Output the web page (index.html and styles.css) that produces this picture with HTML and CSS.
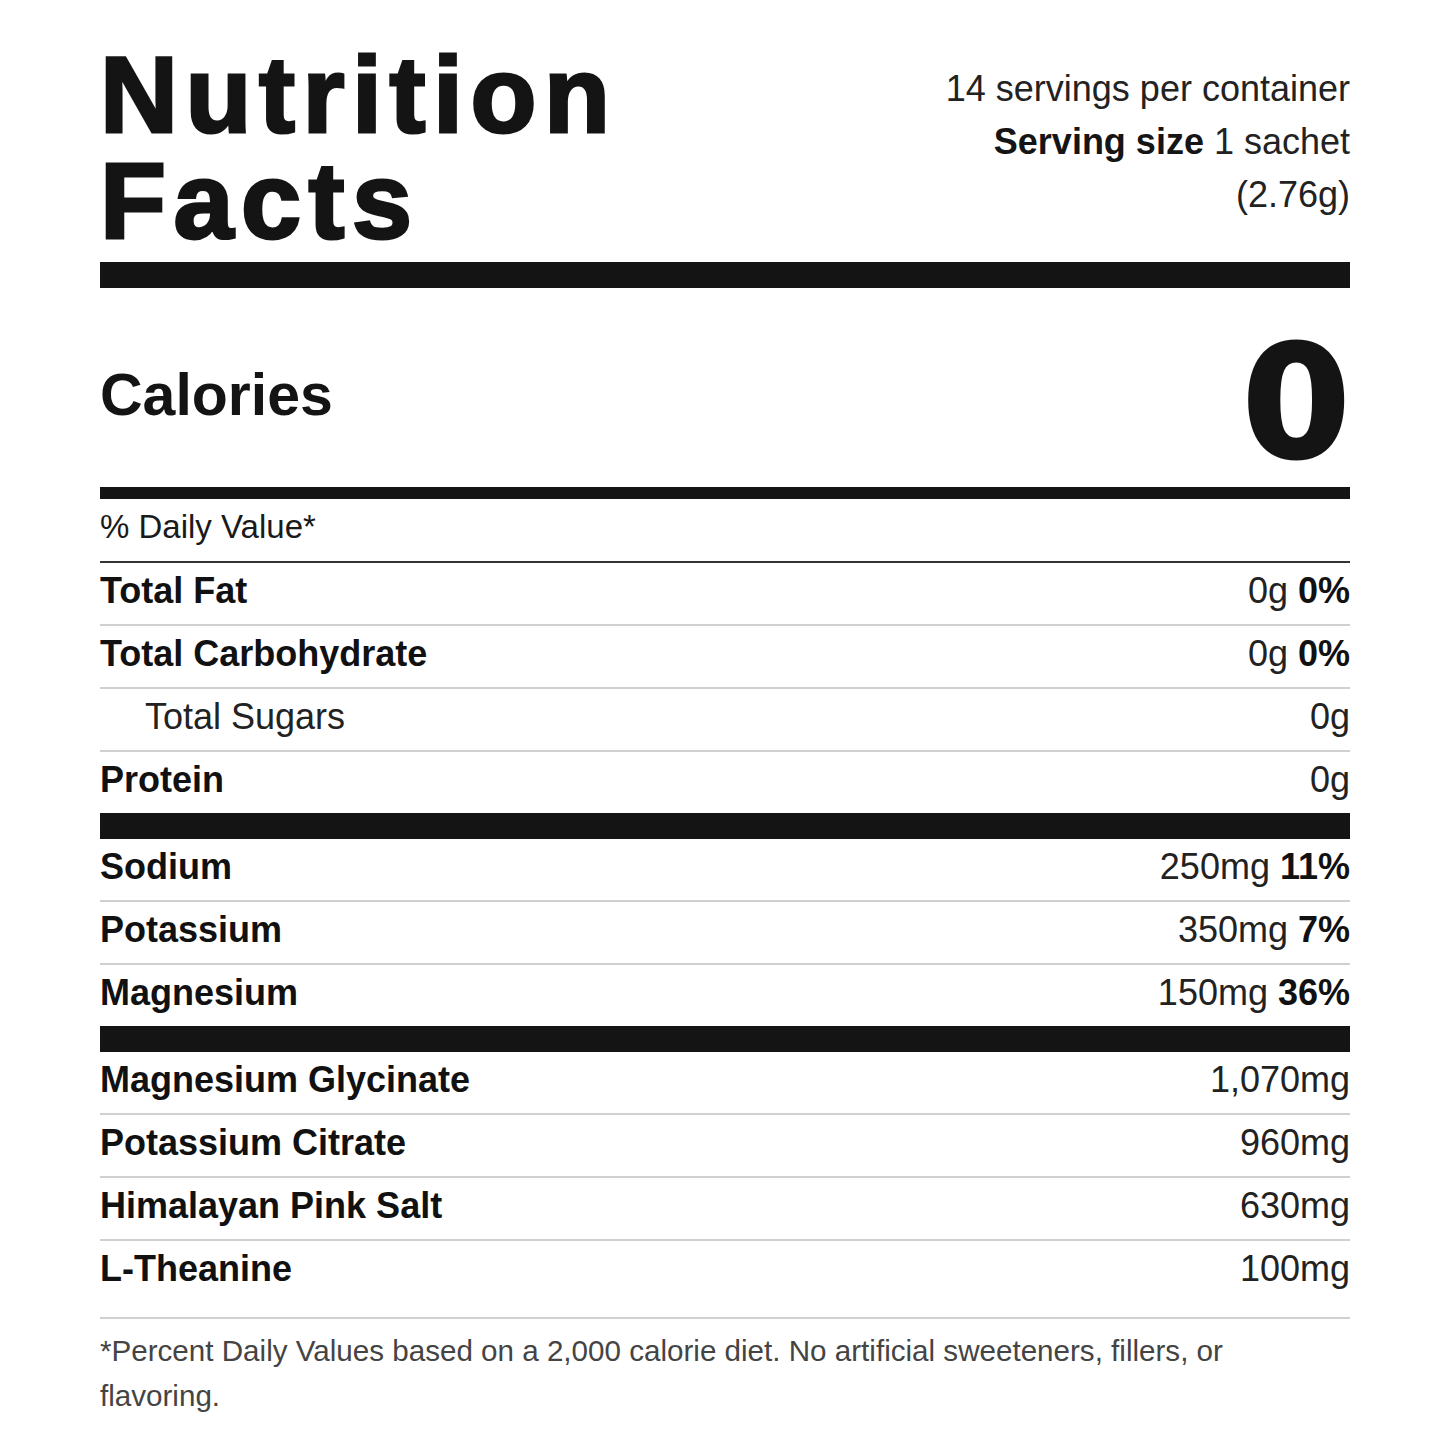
FILE: index.html
```html
<!DOCTYPE html>
<html lang="en">
<head>
<meta charset="utf-8">
<title>Nutrition Facts</title>
<link rel="stylesheet" href="styles.css">
</head>
<body>
<div class="label">
  <header class="top">
    <h1 class="title">Nutrition<br>Facts</h1>
    <div class="serving">
      <p>14 servings per container</p>
      <p><b>Serving size</b> 1 sachet (2.76g)</p>
    </div>
  </header>
  <div class="bar bar-thick bar-top"></div>
  <section class="calories">
    <span class="cal-label">Calories</span>
    <span class="cal-value">0</span>
  </section>
  <div class="bar bar-mid"></div>
  <div class="dv-head">% Daily Value*</div>

  <div class="group">
    <div class="row"><span class="name">Total Fat</span><span class="val">0g <b>0%</b></span></div>
    <div class="row"><span class="name">Total Carbohydrate</span><span class="val">0g <b>0%</b></span></div>
    <div class="row"><span class="name sub">Total Sugars</span><span class="val">0g</span></div>
    <div class="row"><span class="name">Protein</span><span class="val">0g</span></div>
  </div>
  <div class="bar bar-thick"></div>
  <div class="group">
    <div class="row"><span class="name">Sodium</span><span class="val">250mg <b>11%</b></span></div>
    <div class="row"><span class="name">Potassium</span><span class="val">350mg <b>7%</b></span></div>
    <div class="row"><span class="name">Magnesium</span><span class="val">150mg <b>36%</b></span></div>
  </div>
  <div class="bar bar-thick"></div>
  <div class="group group-last">
    <div class="row"><span class="name">Magnesium Glycinate</span><span class="val">1,070mg</span></div>
    <div class="row"><span class="name">Potassium Citrate</span><span class="val">960mg</span></div>
    <div class="row"><span class="name">Himalayan Pink Salt</span><span class="val">630mg</span></div>
    <div class="row"><span class="name">L-Theanine</span><span class="val">100mg</span></div>
  </div>
  <p class="footnote">*Percent Daily Values based on a 2,000 calorie diet. No artificial sweeteners, fillers, or flavoring.</p>
</div>
</body>
</html>
```

FILE: styles.css
```css
html, body {
  margin: 0;
  padding: 0;
  background: #ffffff;
}

body {
  font-family: "Liberation Sans", Arial, sans-serif;
  color: #111111;
}

.label {
  width: 1250px;
  margin-left: 100px;
}

.top {
  display: flex;
  justify-content: space-between;
  align-items: flex-start;
  padding-top: 42px;
}

.title {
  margin: 0;
  font-family: "Liberation Sans", Arial, sans-serif;
  font-weight: 700;
  font-size: 108px;
  line-height: 106px;
  letter-spacing: 7.5px;
  color: #141414;
  -webkit-text-stroke: 3px #141414;
}

.serving {
  margin-top: 20px;
  width: 420px;
  text-align: right;
  font-size: 36px;
  line-height: 53px;
  color: #222222;
}

.serving p {
  margin: 0;
}

.serving b {
  font-weight: 700;
  color: #151515;
}

.bar {
  background: #141414;
}

.bar-thick {
  height: 26px;
}

.bar-top {
  margin-top: 8px;
}

.bar-mid {
  height: 12px;
}

.calories {
  display: flex;
  justify-content: space-between;
  align-items: flex-start;
  padding: 38px 0 6px;
}

.cal-label {
  margin-top: 40px;
  font-weight: 700;
  font-size: 59px;
  line-height: 58px;
  color: #141414;
}

.cal-value {
  font-family: "DejaVu Sans", "Liberation Sans", sans-serif;
  font-weight: 700;
  font-size: 155px;
  line-height: 155px;
  color: #141414;
  -webkit-text-stroke: 3px #141414;
  margin-right: 0;
}

.dv-head {
  font-size: 33px;
  line-height: 48px;
  padding: 4px 0 10px;
  border-bottom: 2px solid #333333;
  color: #1a1a1a;
}

.row {
  display: flex;
  justify-content: space-between;
  align-items: baseline;
  font-size: 36px;
  line-height: 52px;
  padding: 2px 0 7px;
  border-bottom: 2px solid #d0d0d0;
}

.group .row:last-child {
  border-bottom: none;
}

.group-last .row:last-child {
  border-bottom: 2px solid #d0d0d0;
  padding-bottom: 22px;
}

.name {
  font-weight: 700;
  color: #111111;
}

.name.sub {
  font-weight: 400;
  padding-left: 45px;
  color: #222222;
}

.val {
  color: #222222;
}

.val b {
  font-weight: 700;
  color: #111111;
}

.footnote {
  margin: 0;
  padding-top: 9px;
  max-width: 1200px;
  font-size: 29.6px;
  line-height: 45px;
  color: #444444;
}
```
